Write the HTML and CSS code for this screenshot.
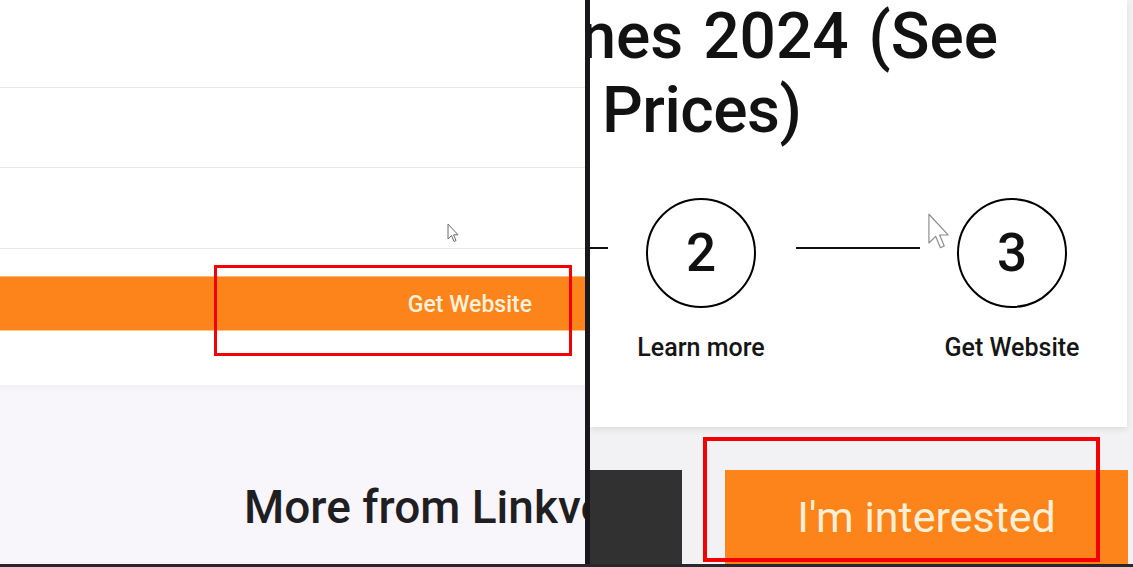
FILE: index.html
```html
<!DOCTYPE html>
<html lang="en">
<head>
  <meta charset="UTF-8" />
  <meta name="viewport" content="width=device-width, initial-scale=1.0" />
  <title>Get Website | Linkvertise</title>
  <link rel="stylesheet" href="styles.css">
</head>
<body>

  <div class="screen">

    <!-- left capture: link page -->
    <section class="left">
      <div class="row first"></div>
      <div class="row"></div>
      <div class="row"></div>

      <div class="cta-wrap">
        <div class="cta">Get Website</div>
      </div>

      <div class="more">
        <h2>More from Linkvertise</h2>
      </div>

      <div class="mark mark-left"></div>
      <svg class="cursor cursor-left" viewBox="0 0 12 20" width="12" height="22">
        <path d="M1 1 L1 16 L4.5 12.5 L7 18.5 L9 17.6 L6.6 11.8 L11 11.8 Z" fill="#fff" stroke="#6b6b70" stroke-width="1" stroke-linejoin="round"/>
      </svg>
    </section>

    <div class="divider"></div>

    <!-- right capture: zoomed in -->
    <section class="right">
      <div class="card">
        <h1 class="title">
          <span class="line1"><span>Best Phones 2024 (See</span></span>
          <span class="line2">Prices)</span>
        </h1>

        <div class="steps">
          <div class="connector short"></div>
          <div class="step">
            <div class="circle">2</div>
            <div class="label">Learn more</div>
          </div>
          <div class="connector"></div>
          <div class="step">
            <div class="circle">3</div>
            <div class="label">Get Website</div>
          </div>
        </div>
      </div>

      <div class="actions">
        <div class="dark-btn"></div>
        <div class="interested">I'm interested</div>
      </div>

      <div class="mark mark-right"></div>
      <svg class="cursor cursor-right" viewBox="0 0 12 20" width="23" height="41">
        <path d="M1 1 L1 16 L4.5 12.5 L7 18.5 L9 17.6 L6.6 11.8 L11 11.8 Z" fill="#fff" stroke="#8a8a8f" stroke-width="0.6" stroke-linejoin="round"/>
      </svg>
    </section>

  </div>
  <div class="edge"></div>

</body>
</html>
```

FILE: styles.css
```css
body {
  margin: 0;
  width: 1133px;
  height: 567px;
  overflow: hidden;
  font-family: Roboto, "Liberation Sans", Arial, sans-serif;
  background: #1d1d22;
}
.screen {
  display: flex;
  height: 564px;
}
.edge {
  height: 3px;
  background: #27272c;
}

/* left */
.left {
  position: relative;
  width: 585px;
  overflow: hidden;
  background: #fff;
  display: flex;
  flex-direction: column;
}
.row {
  height: 79px;
  border-bottom: 1px solid #e9e9ed;
}
.row.first {
  height: 87px;
}
.row:nth-child(3) {
  height: 80px;
}
.cta-wrap {
  padding: 27px 0 54px;
}
.cta {
  height: 55px;
  line-height: 55px;
  background: #fc841a;
  color: #fdf1dc;
  font-size: 23px;
  font-weight: 500;
  text-align: right;
  padding-right: 53px;
  border-top: 1px solid #fbb874;
  border-bottom: 1px solid #fbc48c;
  box-sizing: border-box;
}
.more {
  flex: 1;
  background: #f8f6fa;
  box-shadow: inset 0 6px 8px -6px rgba(0,0,0,0.06);
  padding-top: 95px;
}
.more h2 {
  margin: 0 0 0 244px;
  font-size: 46px;
  line-height: 54px;
  font-weight: 500;
  color: #1f1e23;
  white-space: nowrap;
}

.divider {
  width: 5px;
  background: #17171c;
}

/* right */
.right {
  position: relative;
  flex: 1;
  overflow: hidden;
  background: #f2f2f4;
  display: flex;
  flex-direction: column;
}
.card {
  height: 427px;
  margin-right: 6px;
  background: #fff;
  box-shadow: 0 3px 6px rgba(0,0,0,0.08);
}
.title {
  margin: 0;
  font-size: 64px;
  line-height: 74px;
  font-weight: 500;
  color: #121212;
}
.line1 {
  display: flex;
  justify-content: flex-end;
  width: 408px;
  white-space: nowrap;
  word-spacing: 4px;
}
.line2 {
  display: block;
  padding-left: 12px;
  letter-spacing: -0.5px;
}
.steps {
  display: flex;
  align-items: flex-start;
  margin-top: 50px;
}
.connector {
  width: 124px;
  height: 2px;
  margin: 49px 37px 0 40px;
  background: #111;
}
.connector.short {
  width: 18px;
  margin-left: 0;
  margin-right: 38px;
}
.step {
  width: 110px;
}
.circle {
  width: 110px;
  height: 110px;
  box-sizing: border-box;
  border: 2px solid #000;
  border-radius: 50%;
  display: flex;
  align-items: center;
  justify-content: center;
  font-size: 53px;
  font-weight: 500;
  color: #111;
}
.label {
  display: flex;
  justify-content: center;
  width: 110px;
  margin-top: 26px;
  font-size: 25px;
  line-height: 28px;
  font-weight: 500;
  color: #151515;
  white-space: nowrap;
}
.actions {
  flex: 1;
  display: flex;
  gap: 43px;
  padding-top: 43px;
}
.dark-btn {
  width: 92px;
  background: #323132;
}
.interested {
  width: 403px;
  background: #fc841a;
  color: #fdefd6;
  font-size: 43px;
  line-height: 50px;
  text-align: center;
  padding-top: 22px;
  box-sizing: border-box;
}

/* annotation overlays */
.mark {
  position: absolute;
  border: 3px solid #f30000;
  box-sizing: border-box;
}
.mark-left {
  left: 214px;
  top: 265px;
  width: 358px;
  height: 91px;
}
.mark-right {
  left: 113px;
  top: 437px;
  width: 397px;
  height: 125px;
  border-width: 4px;
}
.cursor {
  position: absolute;
}
.cursor-left {
  left: 447px;
  top: 222px;
}
.cursor-right {
  left: 337px;
  top: 211px;
}
```
